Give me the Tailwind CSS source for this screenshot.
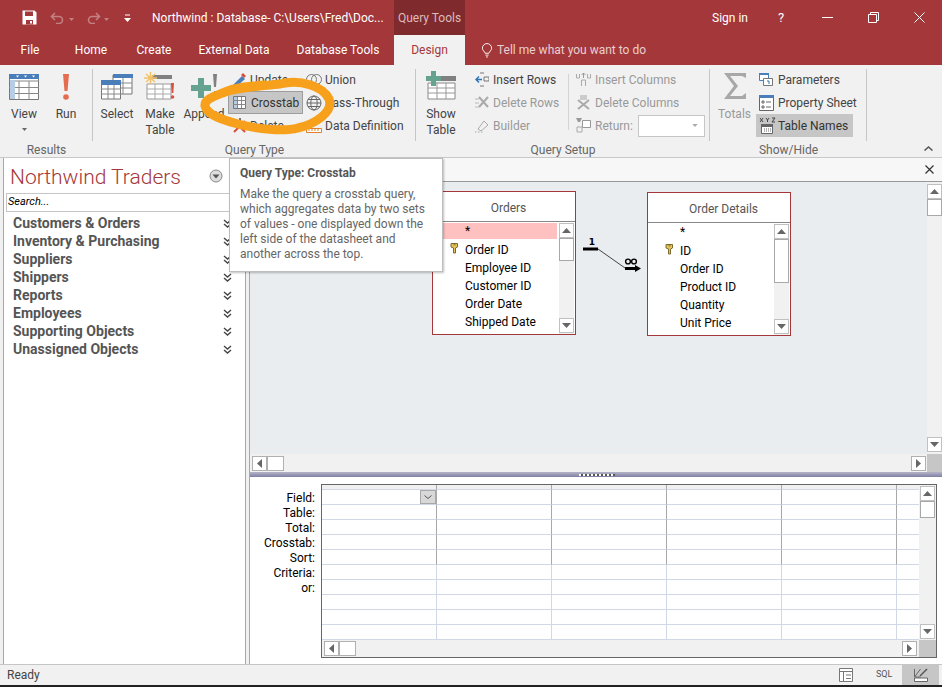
<!DOCTYPE html>
<html>
<head>
<meta charset="utf-8">
<title>Northwind</title>
<script src="https://cdn.jsdelivr.net/npm/@tailwindcss/browser@4"></script>
</head>
<body class="relative w-[942px] h-[687px] overflow-hidden bg-[#f1f1f1] font-['Roboto','Liberation_Sans',sans-serif] text-[12px] text-[#444]">
<svg class="hidden">
  <symbol id="up" viewBox="0 0 9 5"><path d="M4.500 0 9 5H0z" fill="#666"/></symbol>
  <symbol id="down" viewBox="0 0 9 5"><path d="M0 0h9L4.500 5z" fill="#666"/></symbol>
  <symbol id="left" viewBox="0 0 5 9"><path d="M5 0v9L0 4.500z" fill="#666"/></symbol>
  <symbol id="right" viewBox="0 0 5 9"><path d="M0 0v9l5-4.500z" fill="#666"/></symbol>
  <symbol id="grid" viewBox="0 0 30 26">
    <path d="M.5.500h29v25H.5z" fill="#fff" stroke="#777"/>
    <path d="M0 7h30M0 13.500h30M0 19.500h30M10 7v19M20 7v19" stroke="#888" fill="none"/>
  </symbol>
  <symbol id="dbl" viewBox="0 0 9 9"><path d="M1 1l3.500 3L8 1M1 5l3.500 3L8 5" stroke="#444" stroke-width="1.400" fill="none"/></symbol>
  <symbol id="key" viewBox="0 0 9 12"><path d="M1 1.500h6.500v3.500L5.500 6v5h-2V6L1 5z" fill="#e3c35f" stroke="#7d6a2b"/><path d="M3.500 2.800h2" stroke="#7d6a2b"/></symbol>
</svg>

<!-- title bar -->
<div class="h-[35px] bg-[#a4373a] text-white flex items-center">
  <svg class="ml-[22px] w-[15px] h-[15px]" viewBox="0 0 15 15"><path d="M.5.500h12l2 2v12H.5z" fill="#fff"/><path d="M3 1.500h8V6H3zM4 10h7v4.500H4z" fill="#a4373a"/><path d="M8 11h2v2.500H8z" fill="#fff"/></svg>
  <svg class="ml-[13px] w-[24px] h-[12px]" viewBox="0 0 24 12"><path d="M5 1 1.500 4.500 5 8M2 4.500h7a3.500 3.500 0 0 1 0 7H6" stroke="#c28082" stroke-width="1.600" fill="none"/><path d="M19 6h5l-2.500 3z" fill="#c28082"/></svg>
  <svg class="ml-[11px] w-[24px] h-[12px]" viewBox="0 0 24 12"><path d="M11 1l3.500 3.500L11 8M14 4.500H7a3.500 3.500 0 0 0 0 7h3" stroke="#c28082" stroke-width="1.600" fill="none"/><path d="M19 6h5l-2.500 3z" fill="#c28082"/></svg>
  <svg class="ml-[15px] w-[7px] h-[8px]" viewBox="0 0 7 8"><path d="M1 1h5" stroke="#fff"/><path d="M0 4h7L3.500 8z" fill="#fff"/></svg>
  <div class="ml-[21px] w-[242px] whitespace-nowrap">Northwind : Database- C:\Users\Fred\Doc...</div>
  <div class="h-full w-[71px] bg-[#7f2a2d] text-[#dcbcbc] flex items-center justify-center">Query Tools</div>
  <div class="ml-[247px] w-[40px]">Sign in</div>
  <div class="ml-[26px] w-[10px] text-[13px]">?</div>
  <svg class="ml-[34px] w-[11px] h-[11px]" viewBox="0 0 11 11"><path d="M0 5.500h11" stroke="#fff"/></svg>
  <svg class="ml-[35px] w-[11px] h-[11px]" viewBox="0 0 11 11"><path d="M.5 2.500h8v8h-8zM2.500 2.500v-2h8v8h-2" stroke="#fff" fill="none"/></svg>
  <svg class="ml-[35px] w-[11px] h-[11px]" viewBox="0 0 11 11"><path d="M.5.500l10 10M10.500.500l-10 10" stroke="#fff"/></svg>
</div>

<!-- tabs -->
<div class="h-[30px] bg-[#a4373a] text-white flex items-center">
  <div class="w-[60px] text-center">File</div>
  <div class="w-[62px] text-center">Home</div>
  <div class="w-[64px] text-center">Create</div>
  <div class="w-[96px] text-center">External Data</div>
  <div class="w-[112px] text-center">Database Tools</div>
  <div class="w-[71px] h-full bg-[#f1f1f1] text-[#a4373a] flex items-center justify-center">Design</div>
  <svg class="ml-[16px] w-[12px] h-[15px]" viewBox="0 0 13 15"><path d="M4.500 10.500C4 8.500 1.500 7.500 1.500 5a5 5 0 0 1 10 0c0 2.500-2.500 3.500-3 5.500zM4.800 12.500h3.400M5.500 14.500h2" stroke="#fff" fill="none"/></svg>
  <div class="ml-[4px] text-[#e8cfd0]">Tell me what you want to do</div>
</div>

<!-- ribbon -->
<div class="h-[93px] bg-[#f1f1f1] border-b border-[#c8c8c8] flex pt-[4px]">
  <!-- results -->
  <div class="w-[93px] shrink-0 flex flex-col">
    <div class="flex flex-1 pl-[3px] border-r border-[#c6c6c6]">
      <div class="w-[42px] flex flex-col items-center">
        <svg class="w-[30px] h-[26px] mt-[5px]" viewBox="0 0 30 26"><use href="#grid"/><path d="M0 0h30v5H0z" fill="#4a7ebb"/><path d="M1 6h5v19H1z" fill="#b7cde4"/><path d="M7 1.500h3l-1.500 2zM15 1.500h3l-1.500 2zM23 1.500h3l-1.500 2z" fill="#fff"/></svg>
        <div class="mt-[6px] leading-[16px]">View</div>
        <svg class="w-[5px] h-[3px] mt-[6px]" viewBox="0 0 9 5"><use href="#down"/></svg>
      </div>
      <div class="w-[42px] flex flex-col items-center">
        <svg class="w-[8px] h-[26px] mt-[5px]" viewBox="0 0 8 26"><path d="M1 0h6L5.500 17h-3z" fill="#e46c4f"/><circle cx="4" cy="23" r="2.800" fill="#e46c4f"/></svg>
        <div class="mt-[6px] leading-[16px]">Run</div>
      </div>
    </div>
    <div class="h-[16px] text-center text-[#666] leading-[18px]">Results</div>
  </div>
  <!-- query type -->
  <div class="w-[323px] shrink-0 flex flex-col">
    <div class="flex flex-1 pl-[2px] border-r border-[#c6c6c6]">
      <div class="w-[44px] flex flex-col items-center">
        <svg class="w-[32px] h-[26px] mt-[5px]" viewBox="0 0 32 26"><path d="M12 1h19v19H12z" fill="#fff" stroke="#777"/><path d="M12 0h20v4H12z" fill="#4a7ebb"/><path d="M12 9h19M12 14h19M22 4v16" stroke="#888"/><path d="M.5 7h19v18H.5z" fill="#fff" stroke="#777"/><path d="M0 6h20v5H0z" fill="#4a7ebb"/><path d="M0 15h20M0 20h20M7 11v14M13 11v14" stroke="#888"/></svg>
        <div class="mt-[6px] leading-[16px]">Select</div>
      </div>
      <div class="w-[42px] flex flex-col items-center text-center leading-[16px]">
        <svg class="w-[32px] h-[28px] mt-[3px]" viewBox="0 0 32 28"><path d="M8 3h20v4H8z" fill="#808080"/><path d="M3 12h24v15H3z" fill="#fff" stroke="#999"/><path d="M3 17h24M3 22h24M11 12v15M19 12v15" stroke="#aaa"/><path d="M6.500 0v12M0 6h13M2 2l9 8M11 2l-9 8" stroke="#f2c26b" stroke-width="1.500"/><path d="M27 11h3l-.7 10h-1.600z" fill="#d9503f"/><circle cx="28.500" cy="25" r="1.800" fill="#d9503f"/></svg>
        <div class="mt-[6px]">Make<br>Table</div>
      </div>
      <div class="w-[46px] flex flex-col items-center">
        <svg class="w-[26px] h-[26px] mt-[5px]" viewBox="0 0 26 26"><path d="M7 4h6v7h7v6h-7v7H7v-7H0v-6h7z" fill="#65a28f"/><path d="M22 0h4l-1 13h-2z" fill="#808080"/><path d="M23 17h2v3h-2z" fill="#808080"/></svg>
        <div class="mt-[6px] leading-[16px]">Append</div>
      </div>
      <div class="w-[76px] ml-[1px] -mt-[1px] flex flex-col">
        <div class="h-[23px] flex items-center pl-[4px] gap-[3px]">
          <svg class="w-[15px] h-[15px]" viewBox="0 0 15 15"><path d="M1 13l9-9 3 3-9 8z" fill="#4a7ebb"/><path d="M11 1l3 3-2 2-3-3z" fill="#d9503f"/></svg>
          <span>Update</span>
        </div>
        <div class="h-[23px] flex items-center pl-[4px] gap-[5px] bg-[#c6c6c6] border border-[#9d9d9d] w-[75px]">
          <svg class="w-[13px] h-[13px]" viewBox="0 0 13 13"><path d="M.5.500h12v12H.5z" fill="#fff" stroke="#777"/><path d="M1 1h3v11H1z" fill="#b7cde4"/><path d="M0 4.500h13M0 8.500h13M4.500 1v11M8.500 1v11" stroke="#888"/></svg>
          <span class="text-[#333]">Crosstab</span>
        </div>
        <div class="h-[23px] flex items-center pl-[4px] gap-[3px]">
          <svg class="w-[15px] h-[15px]" viewBox="0 0 15 15"><path d="M2 3l11 11M13 3L2 14" stroke="#d9503f" stroke-width="2"/><path d="M7 0h2v6H7z" fill="#777"/></svg>
          <span>Delete</span>
        </div>
      </div>
      <div class="ml-[2px] -mt-[1px] flex flex-col">
        <div class="h-[23px] flex items-center gap-[3px]">
          <svg class="w-[16px] h-[11px]" viewBox="0 0 16 11"><circle cx="5.500" cy="5.500" r="5" fill="none" stroke="#777"/><circle cx="10.500" cy="5.500" r="5" fill="none" stroke="#777"/></svg>
          <span>Union</span>
        </div>
        <div class="h-[23px] flex items-center gap-[3px]">
          <svg class="w-[16px] h-[16px]" viewBox="0 0 16 16"><circle cx="8" cy="8" r="7" fill="none" stroke="#666"/><ellipse cx="8" cy="8" rx="3.200" ry="7" fill="none" stroke="#666"/><path d="M1 8h14M2 4.500h12M2 11.500h12" stroke="#666"/></svg>
          <span>Pass-Through</span>
        </div>
        <div class="h-[23px] flex items-center gap-[3px]">
          <svg class="w-[16px] h-[14px]" viewBox="0 0 16 14"><path d="M1 8l5-6 2 2-5 5z" fill="#777"/><path d="M.5 9.500h15v4H.5z" fill="#fff" stroke="#e0802f"/><path d="M3 10v2M6 10v2M9 10v2M12 10v2" stroke="#e0802f"/></svg>
          <span>Data Definition</span>
        </div>
      </div>
    </div>
    <div class="h-[16px] text-center text-[#666] leading-[18px]">Query Type</div>
  </div>
  <!-- query setup -->
  <div class="w-[294px] shrink-0 flex flex-col">
    <div class="flex flex-1 border-r border-[#c6c6c6]">
      <div class="w-[50px] shrink-0 flex flex-col items-center text-center leading-[16px]">
        <svg class="w-[30px] h-[29px] mt-[2px]" viewBox="0 0 30 29"><path d="M12 5h18v5H12z" fill="#808080"/><path d="M2 12h27v16H2z" fill="#fff" stroke="#888"/><path d="M2 17h27M2 22h27M11 12v16M20 12v16" stroke="#999"/><path d="M5 0h5v5h5v5h-5v5H5v-5H0V5h5z" fill="#65a28f"/></svg>
        <div class="mt-[6px]">Show<br>Table</div>
      </div>
      <div class="w-[93px] shrink-0 ml-[9px] -mt-[1px] flex flex-col">
        <div class="h-[23px] flex items-center gap-[4px]">
          <svg class="w-[14px] h-[15px]" viewBox="0 0 14 15"><path d="M5 1h4M5 14h4M9 5h5v4H9z" stroke="#777" fill="none"/><path d="M7 7.500H1M4 4.500l-3 3 3 3" stroke="#2e75b6" stroke-width="1.500" fill="none"/></svg>
          <span class="text-[#444]">Insert Rows</span>
        </div>
        <div class="h-[23px] flex items-center gap-[4px] text-[#999]">
          <svg class="w-[14px] h-[13px]" viewBox="0 0 14 13"><path d="M0 3h4M0 7h4M0 11h4" stroke="#bbb"/><path d="M4 1l9 10M13 1L4 11" stroke="#aaa" stroke-width="2"/></svg>
          <span>Delete Rows</span>
        </div>
        <div class="h-[23px] flex items-center gap-[4px] text-[#999]">
          <svg class="w-[14px] h-[14px]" viewBox="0 0 14 14"><path d="M3 10l6-8 4 4-7 6z" fill="none" stroke="#aaa"/><path d="M0 13h9" stroke="#aaa" stroke-dasharray="1.500 1.500"/></svg>
          <span>Builder</span>
        </div>
      </div>
      <div class="w-[1px] h-[56px] mt-[5px] bg-[#d4d4d4] shrink-0"></div>
      <div class="ml-[7px] -mt-[1px] flex flex-col text-[#999]">
        <div class="h-[23px] flex items-center gap-[4px]">
          <svg class="w-[15px] h-[14px]" viewBox="0 0 15 14"><path d="M.5 1v4h3V1M11.500 1v4h3V1M5.500 13V7h4v6" stroke="#aaa" fill="none"/><path d="M7.500 5V0M5.500 2l2-2 2 2" stroke="#999" fill="none"/></svg>
          <span>Insert Columns</span>
        </div>
        <div class="h-[23px] flex items-center gap-[4px]">
          <svg class="w-[15px] h-[15px]" viewBox="0 0 15 15"><path d="M4 0h7v5H4z" fill="#ccc"/><path d="M2 5l11 9M13 5L2 14" stroke="#aaa" stroke-width="2"/></svg>
          <span>Delete Columns</span>
        </div>
        <div class="h-[23px] flex items-center">
          <svg class="w-[15px] h-[15px] mr-[4px]" viewBox="0 0 15 15"><path d="M0 0h6L4 4H2z" fill="#999"/><path d="M1 9h5v5H1z" fill="none" stroke="#aaa"/><path d="M6.500 2.500h8v7h-8z" fill="#fff" stroke="#999"/></svg>
          <span class="w-[43px]">Return:</span>
          <div class="w-[67px] h-[22px] bg-white border border-[#c6c6c6] flex items-center justify-end pr-[6px]">
            <svg class="w-[6px] h-[3px]" viewBox="0 0 9 5"><path d="M0 0h9L4.500 5z" fill="#aaa"/></svg>
          </div>
        </div>
      </div>
    </div>
    <div class="h-[16px] text-center text-[#666] leading-[18px]">Query Setup</div>
  </div>
  <!-- show/hide -->
  <div class="w-[157px] shrink-0 flex flex-col">
    <div class="flex flex-1 border-r border-[#c6c6c6]">
      <div class="w-[49px] shrink-0 flex flex-col items-center text-[#999]">
        <svg class="w-[24px] h-[28px] mt-[3px]" viewBox="0 0 24 28"><path d="M1 1h22v5L19 4H7l8 10-8 10h12l4-3v6H1l10-13z" fill="#a8a8a8"/></svg>
        <div class="mt-[6px] leading-[16px]">Totals</div>
      </div>
      <div class="-mt-[1px] flex flex-col">
        <div class="h-[23px] flex items-center gap-[3px]">
          <svg class="w-[16px] h-[15px]" viewBox="0 0 16 15"><path d="M.5 1.500h9v7h-9z" fill="#fff" stroke="#4a7ebb"/><path d="M0 1h10v2H0z" fill="#4a7ebb"/><path d="M4.500 6.500h9v7h-9z" fill="#fff" stroke="#777"/><path d="M8 9h2v3" stroke="#2e75b6" fill="none"/></svg>
          <span>Parameters</span>
        </div>
        <div class="h-[23px] flex items-center gap-[4px]">
          <svg class="w-[15px] h-[16px]" viewBox="0 0 15 16"><path d="M.5.500h14v15H.5z" fill="#fff" stroke="#666"/><path d="M0 0h15v3H0z" fill="#4a7ebb"/><path d="M3 6h2v2H3zM3 11h2v2H3zM7 7h5M7 12h5" stroke="#666" fill="none"/></svg>
          <span class="whitespace-nowrap">Property Sheet</span>
        </div>
        <div class="h-[23px] w-[97px] -ml-[3px] bg-[#c6c6c6] flex items-center gap-[2px] pl-[3px]">
          <svg class="w-[17px] h-[17px] shrink-0" viewBox="0 0 17 17"><path d="M1 1l3 4M4 1L1 5M7 1l1.500 2L10 1M8.500 3v2M13 1h3l-3 4h3" stroke="#444" fill="none"/><path d="M2.500 7.500h11v9h-11z" fill="#fff" stroke="#666"/><path d="M2 7h12v3H2z" fill="#666"/><path d="M5 12h7M5 14h7" stroke="#666" stroke-dasharray="1 1"/></svg>
          <span class="text-[#333] whitespace-nowrap">Table Names</span>
        </div>
      </div>
    </div>
    <div class="h-[16px] text-center text-[#666] leading-[18px]">Show/Hide</div>
  </div>
  <div class="flex-1 flex items-end justify-end pr-[9px] pb-[6px]">
    <svg class="w-[9px] h-[5px] shrink-0" viewBox="0 0 9 5"><path d="M.5 4.500l4-3.500 4 3.500" stroke="#555" stroke-width="1.500" fill="none"/></svg>
  </div>
</div>

<!-- main -->
<div class="h-[506px] flex bg-[#f1f1f1]">
  <!-- nav pane -->
  <div class="ml-[3px] w-[243px] bg-white border-r border-l border-[#a8a8a8] flex flex-col">
    <div class="h-[35px] pt-[3px] flex items-center pl-[6px] pr-[22px] justify-between">
      <span class="text-[21px] font-light text-[#a4373a] leading-none whitespace-nowrap">Northwind Traders</span>
      <svg class="w-[14px] h-[14px] -mt-[2px]" viewBox="0 0 14 14"><circle cx="7" cy="7" r="6" fill="#ddd" stroke="#888"/><path d="M3.500 5.500h7L7 9.500z" fill="#555"/></svg>
    </div>
    <div class="mx-[2px] h-[19px] border border-[#c6c6c6] flex items-center pl-[1px] text-[11px] italic text-black">Search...</div>
    <div class="mt-[2px] flex flex-col font-bold text-[14px] text-[#555] leading-[18px]">
      <div class="h-[18px] flex justify-between items-center pl-[9px] pr-[13px]"><span>Customers &amp; Orders</span><svg class="w-[9px] h-[9px]" viewBox="0 0 9 9"><use href="#dbl"/></svg></div>
      <div class="h-[18px] flex justify-between items-center pl-[9px] pr-[13px]"><span>Inventory &amp; Purchasing</span><svg class="w-[9px] h-[9px]" viewBox="0 0 9 9"><use href="#dbl"/></svg></div>
      <div class="h-[18px] flex justify-between items-center pl-[9px] pr-[13px]"><span>Suppliers</span><svg class="w-[9px] h-[9px]" viewBox="0 0 9 9"><use href="#dbl"/></svg></div>
      <div class="h-[18px] flex justify-between items-center pl-[9px] pr-[13px]"><span>Shippers</span><svg class="w-[9px] h-[9px]" viewBox="0 0 9 9"><use href="#dbl"/></svg></div>
      <div class="h-[18px] flex justify-between items-center pl-[9px] pr-[13px]"><span>Reports</span><svg class="w-[9px] h-[9px]" viewBox="0 0 9 9"><use href="#dbl"/></svg></div>
      <div class="h-[18px] flex justify-between items-center pl-[9px] pr-[13px]"><span>Employees</span><svg class="w-[9px] h-[9px]" viewBox="0 0 9 9"><use href="#dbl"/></svg></div>
      <div class="h-[18px] flex justify-between items-center pl-[9px] pr-[13px]"><span>Supporting Objects</span><svg class="w-[9px] h-[9px]" viewBox="0 0 9 9"><use href="#dbl"/></svg></div>
      <div class="h-[18px] flex justify-between items-center pl-[9px] pr-[13px]"><span>Unassigned Objects</span><svg class="w-[9px] h-[9px]" viewBox="0 0 9 9"><use href="#dbl"/></svg></div>
    </div>
  </div>

  <!-- query window -->
  <div class="ml-[3px] flex-1 border-l border-[#a8a8a8] flex flex-col bg-white">
    <div class="h-[24px] bg-[#f7f7f7] border-b border-[#999] flex items-center justify-end pr-[8px]">
      <svg class="w-[9px] h-[9px]" viewBox="0 0 9 9"><path d="M.5.500l8 8M8.500.500l-8 8" stroke="#333" stroke-width="1.200"/></svg>
    </div>
    <div class="h-[272px] flex">
      <div class="relative flex-1 bg-[#e9edf0] overflow-hidden">
        <!-- Orders -->
        <div class="absolute left-[182px] top-[9px] w-[144px] h-[144px] bg-white border border-[#a4373a] flex flex-col">
          <div class="h-[30px] pt-[3px] pl-[9px] border-b border-[#888] flex items-center justify-center text-[#555]">Orders</div>
          <div class="flex flex-1 pt-[1px] text-black">
            <div class="flex-1">
              <div class="h-[16px] mb-[2px] bg-[#ffc0c0] pl-[32px] leading-[16px]">*</div>
              <div class="relative h-[18px] pl-[32px] leading-[18px]"><svg class="absolute left-[17px] top-[1px] w-[9px] h-[12px]" viewBox="0 0 9 12"><use href="#key"/></svg>Order ID</div>
              <div class="h-[18px] pl-[32px] leading-[18px]">Employee ID</div>
              <div class="h-[18px] pl-[32px] leading-[18px]">Customer ID</div>
              <div class="h-[18px] pl-[32px] leading-[18px]">Order Date</div>
              <div class="h-[18px] pl-[32px] leading-[18px]">Shipped Date</div>
            </div>
            <div class="w-[15px] ml-[2px] mr-px bg-[#f1f1f1] flex flex-col justify-between">
              <div>
                <div class="h-[15px] border border-[#c0c0c0] bg-white flex items-center justify-center"><svg class="w-[9px] h-[5px]" viewBox="0 0 9 5"><use href="#up"/></svg></div>
                <div class="h-[23px] border border-[#a8a8a8] bg-white"></div>
              </div>
              <div class="h-[15px] mb-[1px] border border-[#c0c0c0] bg-white flex items-center justify-center"><svg class="w-[9px] h-[5px]" viewBox="0 0 9 5"><use href="#down"/></svg></div>
            </div>
          </div>
        </div>
        <!-- relationship -->
        <svg class="absolute left-[330px] top-[50px] w-[65px] h-[42px]" viewBox="0 0 65 42">
          <path d="M3 17h15" stroke="#000" stroke-width="3"/>
          <path d="M18 17l27 19" stroke="#444"/>
          <path d="M45 36.500h12" stroke="#000" stroke-width="3"/>
          <path d="M55 33l6 3.500-6 3.500z" fill="#000"/>
          <text x="12" y="13" font-size="9" font-weight="700" text-anchor="middle" font-family="DejaVu Sans" fill="#000">1</text>
          <circle cx="48" cy="29.500" r="2.400" fill="none" stroke="#000" stroke-width="1.400"/>
          <circle cx="54" cy="29.500" r="2.400" fill="none" stroke="#000" stroke-width="1.400"/>
        </svg>
        <!-- Order Details -->
        <div class="absolute left-[397px] top-[10px] w-[144px] h-[144px] bg-white border border-[#a4373a] flex flex-col">
          <div class="h-[30px] pt-[3px] pl-[9px] border-b border-[#888] flex items-center justify-center text-[#555]">Order Details</div>
          <div class="flex flex-1 pt-[1px] text-black">
            <div class="flex-1">
              <div class="h-[16px] mb-[2px] pl-[32px] leading-[16px]">*</div>
              <div class="relative h-[18px] pl-[32px] leading-[18px]"><svg class="absolute left-[17px] top-[1px] w-[9px] h-[12px]" viewBox="0 0 9 12"><use href="#key"/></svg>ID</div>
              <div class="h-[18px] pl-[32px] leading-[18px]">Order ID</div>
              <div class="h-[18px] pl-[32px] leading-[18px]">Product ID</div>
              <div class="h-[18px] pl-[32px] leading-[18px]">Quantity</div>
              <div class="h-[18px] pl-[32px] leading-[18px]">Unit Price</div>
            </div>
            <div class="w-[15px] ml-[2px] mr-px bg-[#f1f1f1] flex flex-col justify-between">
              <div>
                <div class="h-[15px] border border-[#c0c0c0] bg-white flex items-center justify-center"><svg class="w-[9px] h-[5px]" viewBox="0 0 9 5"><use href="#up"/></svg></div>
                <div class="h-[44px] border border-[#a8a8a8] bg-white"></div>
              </div>
              <div class="h-[15px] mb-[1px] border border-[#c0c0c0] bg-white flex items-center justify-center"><svg class="w-[9px] h-[5px]" viewBox="0 0 9 5"><use href="#down"/></svg></div>
            </div>
          </div>
        </div>
      </div>
      <!-- canvas v scroll -->
      <div class="w-[15px] bg-[#f1f1f1] flex flex-col justify-between pt-[2px] pb-[2px]">
        <div>
          <div class="h-[15px] border border-[#c0c0c0] bg-white flex items-center justify-center"><svg class="w-[9px] h-[5px]" viewBox="0 0 9 5"><use href="#up"/></svg></div>
          <div class="h-[17px] border border-[#a8a8a8] bg-white"></div>
        </div>
        <div class="h-[15px] border border-[#c0c0c0] bg-white flex items-center justify-center"><svg class="w-[9px] h-[5px]" viewBox="0 0 9 5"><use href="#down"/></svg></div>
      </div>
    </div>
    <!-- canvas h scroll -->
    <div class="h-[18px] bg-[#f1f1f1] flex items-center pl-[2px]">
      <div class="w-[15px] h-[15px] border border-[#b0b0b0] bg-white flex items-center justify-center"><svg class="w-[5px] h-[9px]" viewBox="0 0 5 9"><use href="#left"/></svg></div>
      <div class="w-[17px] h-[15px] border border-[#b0b0b0] bg-white"></div>
      <div class="flex-1"></div>
      <div class="w-[15px] h-[15px] border border-[#b0b0b0] bg-white flex items-center justify-center mr-[1px]"><svg class="w-[5px] h-[9px]" viewBox="0 0 5 9"><use href="#right"/></svg></div>
      <div class="w-[15px] h-[18px] bg-[#c6c6c6]"></div>
    </div>
    <!-- splitter -->
    <div class="h-[5px] bg-[linear-gradient(#b5b5c8,#7f7fa3)] flex justify-center items-center"><div class="w-[36px] h-[2px] ml-[2px] bg-[repeating-linear-gradient(90deg,#fff_0,#fff_2px,#555_2px,#555_4px)]"></div></div>
    <!-- grid pane -->
    <div class="flex-1 flex bg-white pt-[7px]">
      <div class="w-[71px] pr-[6px] pt-[7px] text-right text-black leading-[15px] shrink-0">
        <div>Field:</div><div>Table:</div><div>Total:</div><div>Crosstab:</div><div>Sort:</div><div>Criteria:</div><div>or:</div>
      </div>
      <div class="w-[616px] h-[174px] border border-[#666] flex flex-col shrink-0">
        <div class="flex-1 flex min-h-0">
          <div id="cols" class="flex-1 flex overflow-hidden"></div>
          <div class="w-[17px] bg-[#f1f1f1] flex flex-col justify-between pt-[1px] pb-[1px] items-center">
            <div>
              <div class="w-[15px] h-[15px] border border-[#c0c0c0] bg-white flex items-center justify-center"><svg class="w-[9px] h-[5px]" viewBox="0 0 9 5"><use href="#up"/></svg></div>
              <div class="w-[15px] h-[17px] border border-[#a8a8a8] bg-white"></div>
            </div>
            <div class="w-[15px] h-[15px] border border-[#c0c0c0] bg-white flex items-center justify-center"><svg class="w-[9px] h-[5px]" viewBox="0 0 9 5"><use href="#down"/></svg></div>
          </div>
        </div>
        <div class="h-[17px] bg-[#f1f1f1] flex items-center pl-[2px]">
          <div class="w-[15px] h-[15px] border border-[#b0b0b0] bg-white flex items-center justify-center"><svg class="w-[5px] h-[9px]" viewBox="0 0 5 9"><use href="#left"/></svg></div>
          <div class="w-[17px] h-[15px] border border-[#b0b0b0] bg-white"></div>
          <div class="flex-1"></div>
          <div class="w-[15px] h-[15px] border border-[#b0b0b0] bg-white flex items-center justify-center"><svg class="w-[5px] h-[9px]" viewBox="0 0 5 9"><use href="#right"/></svg></div>
          <div class="ml-[2px] w-[17px] h-[17px] bg-[#c6c6c6]"></div>
        </div>
      </div>
    </div>
  </div>
</div>

<!-- status bar -->
<div class="h-[21px] bg-[#f1f1f1] border-t border-[#c6c6c6] flex items-center pl-[7px] text-[#444]">
  <span class="w-[32px]">Ready</span>
  <svg class="ml-[800px] w-[14px] h-[14px]" viewBox="0 0 14 14"><path d="M.5.500h13v13H.5z" fill="#fff" stroke="#777"/><path d="M0 3.500h14M4.500 3v11M7 7h5M7 10.500h5" stroke="#777" fill="none"/></svg>
  <span class="ml-[23px] w-[16px] text-[9px] text-[#555]">SQL</span>
  <div class="ml-[10px] w-[37px] h-full bg-[#c6c6c6] flex items-center justify-center">
    <svg class="w-[14px] h-[14px]" viewBox="0 0 14 14"><path d="M.5 1v8h6M.5 9l6-8" stroke="#666" fill="none"/><path d="M6 8l7-7" stroke="#555" stroke-width="1.500"/><path d="M.5 10h13v3.500H.5z" fill="#fff" stroke="#666"/></svg>
  </div>
</div>
<div class="h-[2px] bg-[#222]"></div>

<!-- tooltip -->
<div class="absolute left-[229px] top-[158px] w-[214px] h-[114px] bg-white border border-[#bdbdbd] shadow-[1px_1px_2px_rgba(0,0,0,0.25)] pl-[10px] pt-[7px] text-[#666] leading-[15px] whitespace-nowrap">
  <div class="font-bold text-[#555] mb-[6px]">Query Type: Crosstab</div>
  <div>Make the query a crosstab query,</div>
  <div>which aggregates data by two sets</div>
  <div>of values - one displayed down the</div>
  <div>left side of the datasheet and</div>
  <div>another across the top.</div>
</div>

<!-- orange hand drawn ring over the ribbon -->
<svg class="absolute left-[195px] top-[66px] w-[140px] h-[72px] pointer-events-none" viewBox="0 0 140 72">
  <path d="M30 26C45 21 68 20 85 18C105 13 128 20 134 33C139 46 120 58 103 62C88 66 62 63 43 58C28 54 12 49 10 40C9 33 20 30 30 26C42 21 55 20 70 19" fill="none" stroke="#f7a01c" stroke-width="9" stroke-linecap="round"/>
</svg>

<script>
  // query grid, same rows in every column
  const cols = document.getElementById("cols");
  const widths = [115, 115, 115, 115, 115, 30];
  widths.forEach((w, c) => {
    const col = document.createElement("div");
    col.className = "shrink-0 flex flex-col";
    col.style.width = w + "px";
    let html = '<div class="h-[5px] bg-[#f0f0f0] border-b border-[#d0d7e5] border-r border-r-[#a8a8a8]"></div>';
    for (let r = 0; r < 10; r++) {
      const line = r < 5 ? "border-r-[#a8a8a8]" : "border-r-[#d0d7e5]";
      const btn = c === 0 && r === 0
        ? '<div class="ml-auto w-[16px] h-[14px] bg-[#d8d8d8] border border-[#a8a8a8] flex items-center justify-center"><svg class="w-[8px] h-[4px]" viewBox="0 0 8 4"><path d="M.5.500 4 3.500 7.500.500" stroke="#555" fill="none"/></svg></div>'
        : "";
      html += '<div class="h-[15px] flex border-b border-[#d0d7e5] border-r ' + line + '">' + btn + "</div>";
    }
    col.innerHTML = html;
    cols.appendChild(col);
  });
</script>
</body>
</html>
